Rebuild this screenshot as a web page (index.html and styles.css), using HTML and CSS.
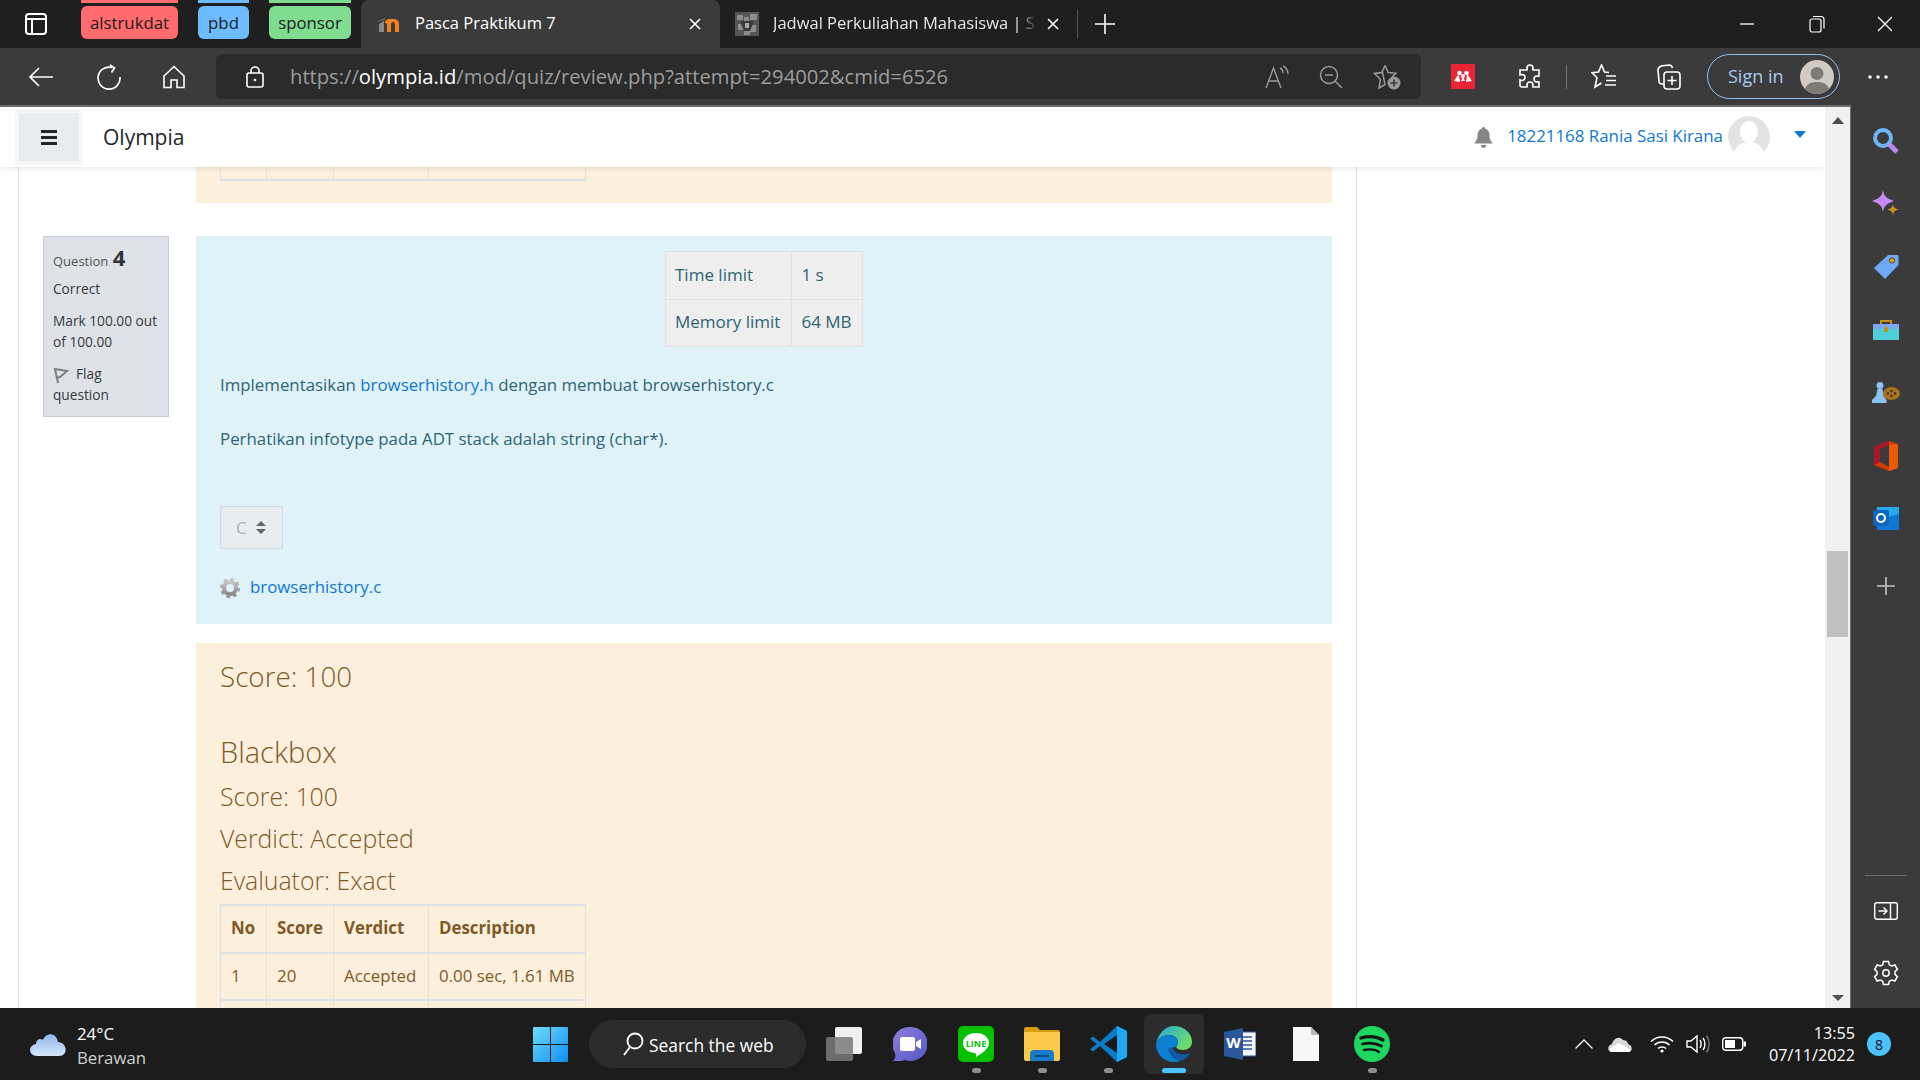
FILE: index.html
```html
<!DOCTYPE html>
<html lang="id">
<head>
    <meta charset="UTF-8">
    <title>Pasca Praktikum 7</title>
    <link rel="stylesheet" href="styles.css">
</head>
<body>
    <div class="tabstrip">
        <svg class="win-icon" width="22" height="22" viewBox="0 0 22 22" fill="none" stroke="#fff" stroke-width="2"><rect x="1" y="1" width="20" height="20" rx="3"/><path d="M1 6h20M7 6v15"/></svg>
        <div class="group group-red"><span>alstrukdat</span></div>
        <div class="group group-blue"><span>pbd</span></div>
        <div class="group group-green"><span>sponsor</span></div>
        <div class="tab tab-active">
            <svg class="favicon" width="24" height="24" viewBox="0 0 24 24"><path d="M8 20V11c0-3 2-4 5-4h3c4 0 6 2 6 5v8h-4v-8c0-1-1-2-2-2s-2 1-2 2v8h-4v-8c0-1-1-1-2-1z" fill="#f58220"/><path d="M2 20v-8l5-3v11z" fill="#8a8a8a"/><path d="M1 9l7-3v2l-7 2z" fill="#666"/></svg>
            <span class="tab-title">Pasca Praktikum 7</span>
            <svg class="tab-close" width="14" height="14" viewBox="0 0 14 14" stroke="#fff" stroke-width="1.6"><path d="M2 2l10 10M12 2L2 12"/></svg>
        </div>
        <div class="tab tab-other">
            <svg class="favicon" width="24" height="24" viewBox="0 0 24 24"><rect width="24" height="24" fill="#555"/><path d="M2 3h6v5H2zM15 2h7v6h-7zM9 5h5v6H9zM3 12h6v6H3zM14 13h7v7h-7zM9 17h6v6H9z" fill="#8d8d8d"/><path d="M6 9h12v3l-3 7H9l-3-7z" fill="#3a3a3a"/><path d="M10 11h4v5h-4z" fill="#a8a8a8"/></svg>
            <span class="tab-title tab-title-fade">Jadwal Perkuliahan Mahasiswa | S</span>
            <svg class="tab-close" width="14" height="14" viewBox="0 0 14 14" stroke="#fff" stroke-width="1.6"><path d="M2 2l10 10M12 2L2 12"/></svg>
        </div>
        <div class="tab-sep"></div>
        <svg class="new-tab" width="22" height="22" viewBox="0 0 22 22" stroke="#fff" stroke-width="1.6"><path d="M11 1v20M1 11h20"/></svg>
        <div class="win-buttons">
            <svg width="16" height="16" viewBox="0 0 16 16" stroke="#fff" stroke-width="1.3"><path d="M1 8h14"/></svg>
            <svg class="win-restore" width="16" height="18" viewBox="0 0 16 18" fill="none" stroke="#fff" stroke-width="1.2"><rect x="1" y="4" width="11" height="13" rx="2"/><path d="M4 1.500h8a3 3 0 0 1 3 3v9"/></svg>
            <svg width="16" height="16" viewBox="0 0 16 16" stroke="#fff" stroke-width="1.2"><path d="M1 1l14 14M15 1L1 15"/></svg>
        </div>
    </div>

    <div class="toolbar">
        <svg class="tool-back" width="26" height="22" viewBox="0 0 26 22" fill="none" stroke="#fff" stroke-width="1.7"><path d="M25 11H2M11 2l-9 9 9 9"/></svg>
        <svg class="tool-reload" width="26" height="26" viewBox="0 0 26 26" fill="none" stroke="#fff" stroke-width="1.7"><path d="M16 3.500a11 11 0 1 0 8 9.500"/><path d="M14 1l4.500 3-3 4.500"/></svg>
        <svg class="tool-home" width="24" height="24" viewBox="0 0 24 24" fill="none" stroke="#fff" stroke-width="1.6"><path d="M12 1.500L2 11v11.500h7V15h6v7.500h7V11z"/></svg>
        <div class="addressbar">
            <svg class="lock" width="18" height="22" viewBox="0 0 18 22" fill="none" stroke="#fff" stroke-width="1.6"><rect x="1" y="7" width="16" height="14" rx="2"/><path d="M5 7V5a4 4 0 0 1 8 0v2"/><circle cx="9" cy="14" r="1.300" fill="#fff" stroke="none"/></svg>
            <div class="url">https://<b>olympia.id</b>/mod/quiz/review.php?attempt=294002&amp;cmid=6526</div>
            <svg class="addr-read" width="26" height="24" viewBox="0 0 26 24" fill="none" stroke="#9a9a9a" stroke-width="1.400"><path d="M1 23L8.500 3 16 23M4 16h9"/><path d="M15 3c2 1 3 3 3 5M18 1c3 1.500 5 4 5 8"/></svg>
            <svg class="addr-zoom" width="24" height="24" viewBox="0 0 24 24" fill="none" stroke="#9a9a9a" stroke-width="1.500"><circle cx="10" cy="10" r="8.500"/><path d="M6 10h8M16 16l7 7"/></svg>
            <svg class="addr-fav" width="28" height="26" viewBox="0 0 28 26" fill="none" stroke="#9a9a9a" stroke-width="1.500"><path d="M12 1.500l3.200 7 7.800 .8-4 3.700M12 20.500l-6 3.500 1.500-8.600-6-6 8-1z"/><path d="M12 1.500L8.500 9.400"/><circle cx="21" cy="19" r="6.500" fill="#9a9a9a" stroke="none"/><path d="M21 15.500v7M17.500 19h7" stroke="#3b3b3b" stroke-width="1.700"/></svg>
        </div>
        <svg class="ext-mendeley" width="24" height="25" viewBox="0 0 24 25"><rect width="24" height="25" fill="#ea2335"/><circle cx="8.500" cy="9" r="2.300" fill="#fff"/><circle cx="15.500" cy="9" r="2.300" fill="#fff"/><circle cx="12" cy="12" r="2" fill="#fff"/><path d="M3 17c2-2 2-5 5-6l1 7zM21 17c-2-2-2-5-5-6l-1 7zM10 17l2-4 2 4z" fill="#fff"/></svg>
        <svg class="ext-puzzle" width="24" height="26" viewBox="0 0 24 26" fill="none" stroke="#fff" stroke-width="1.600"><path d="M9 4a3 3 0 0 1 6 0c0 1-.5 1 0 2h6v6c-1 .5-1 0-2 0a3 3 0 0 0 0 6c1 0 1-.5 2 0v5H15c-.5-1 0-1.500 0-2a3 3 0 0 0-6 0c0 .5.500 1 0 2H4c-1.500 0-2-1-2-2v-5c1 .5 1.500.5 2 .5a3 3 0 0 0 0-6c-.5 0-1 0-2 .5V6h7c.5-1 0-1 0-2z"/></svg>
        <div class="tool-sep"></div>
        <svg class="tool-favs" width="26" height="26" viewBox="0 0 26 26" fill="none" stroke="#fff" stroke-width="1.600"><path d="M18 8.500l-4.500-.4L10.500 1 7.500 8.100 1 8.700l5 5L4 23l6.500-4"/><path d="M15 12h10M15 16.500h10M14 21h11"/></svg>
        <svg class="tool-coll" width="24" height="26" viewBox="0 0 24 26" fill="none" stroke="#fff" stroke-width="1.600"><path d="M7 20l-2 0c-2 0-3-1-3-3L1 6c0-2 1-3 3-4l8-1c1.500 0 3 1 3.500 3"/><rect x="7" y="8" width="16" height="17" rx="3"/><path d="M15 12v9M10.500 16.500h9"/></svg>
        <div class="signin">
            <span>Sign in</span>
            <svg width="34" height="34" viewBox="0 0 34 34"><circle cx="17" cy="17" r="17" fill="#cfcbc4"/><circle cx="17" cy="13.500" r="6.500" fill="#7d7a75"/><path d="M5 29c2-6 7-7 12-7s10 1 12 7a17 17 0 0 1-24 0z" fill="#7d7a75"/></svg>
        </div>
        <svg class="tool-dots" width="20" height="4" viewBox="0 0 20 4" fill="#fff"><circle cx="2" cy="2" r="1.800"/><circle cx="10" cy="2" r="1.800"/><circle cx="18" cy="2" r="1.800"/></svg>
    </div>

    <div class="browser-main">
        <div class="viewport">
            <div class="page">
                <header class="site-header">
                    <div class="nav-toggle"><div class="nav-toggle-inner"><span></span><span></span><span></span></div></div>
                    <div class="brand">Olympia</div>
                    <svg class="bell" width="19" height="21" viewBox="0 0 19 21" fill="#868686"><path d="M9.500 0c1 0 1.500 .7 1.500 1.500C14 2.300 15.500 5 15.500 8c0 4 1 6 3.500 8.500H0C2.500 14 3.500 12 3.500 8 3.500 5 5 2.300 8 1.500 8 .7 8.500 0 9.500 0zM7 18h5c0 2-1 3-2.500 3S7 20 7 18z"/></svg>
                    <a class="username">18221168 Rania Sasi Kirana</a>
                    <svg class="user-pic" width="42" height="42" viewBox="0 0 42 42"><circle cx="21" cy="21" r="21" fill="#e3e3e3"/><ellipse cx="21" cy="16" rx="9" ry="11" fill="#fff"/><path d="M6 37c2-8 9-11 15-11s13 3 15 11a21 21 0 0 1-30 0z" fill="#fff"/></svg>
                    <div class="user-caret"></div>
                </header>

                <div class="region">
                    <div class="stub-row">
                        <div class="alert-warning stub-block">
                            <table class="result-table stub-table">
                                <tr><td class="col-no"></td><td class="col-score"></td><td class="col-verdict"></td><td class="col-desc"></td></tr>
                            </table>
                        </div>
                    </div>

                    <div class="question">
                        <div class="q-info">
                            <div class="q-no">Question <b>4</b></div>
                            <div class="q-state">Correct</div>
                            <div class="q-grade">Mark 100.00 out<br>of 100.00</div>
                            <div class="q-flag"><svg width="16" height="17" viewBox="0 0 16 17" fill="none" stroke="#808080" stroke-width="2"><path d="M5 16L2 2l12 2-7 6-3 .5"/></svg>Flag<br>question</div>
                        </div>
                        <div class="q-content">
                            <div class="alert-info">
                                <table class="limit-table">
                                    <tr><td class="limit-label">Time limit</td><td class="limit-value">1 s</td></tr>
                                    <tr><td class="limit-label">Memory limit</td><td class="limit-value">64 MB</td></tr>
                                </table>
                                <p class="p-first">Implementasikan <a>browserhistory.h</a> dengan membuat browserhistory.c</p>
                                <p class="p-second">Perhatikan infotype pada ADT stack adalah string (char*).</p>
                                <div class="lang-select">C
                                    <svg width="10" height="13" viewBox="0 0 10 13" fill="#666"><path d="M5 0l5 5H0zM5 13L0 8h10z"/></svg>
                                </div>
                                <div class="file-row">
                                    <svg width="20" height="20" viewBox="0 0 20 20"><defs><linearGradient id="cog" x1="0" y1="0" x2="0" y2="1"><stop offset="0" stop-color="#c4c4c4"/><stop offset="1" stop-color="#8a8a8a"/></linearGradient></defs><circle cx="10" cy="10" r="6" fill="none" stroke="url(#cog)" stroke-width="4"/><circle cx="10" cy="10" r="8.500" fill="none" stroke="url(#cog)" stroke-width="3" stroke-dasharray="3.300 3.400"/></svg>
                                    <a>browserhistory.c</a>
                                </div>
                            </div>
                            <div class="alert-warning result-block">
                                <div class="h-score">Score: 100</div>
                                <div class="h-blackbox">Blackbox</div>
                                <div class="h-line">Score: 100</div>
                                <div class="h-line">Verdict: Accepted</div>
                                <div class="h-line">Evaluator: Exact</div>
                                <table class="result-table">
                                    <tr><th class="col-no">No</th><th class="col-score">Score</th><th class="col-verdict">Verdict</th><th class="col-desc">Description</th></tr>
                                    <tr><td>1</td><td>20</td><td>Accepted</td><td>0.00 sec, 1.61 MB</td></tr>
                                    <tr><td></td><td></td><td></td><td></td></tr>
                                </table>
                            </div>
                        </div>
                    </div>
                </div>
            </div>

            <div class="scrollbar">
                <div class="arrow-up"></div>
                <div class="thumb"></div>
                <div class="arrow-down"></div>
            </div>
        </div>

        <aside class="sidebar">
            <div class="side-item"><svg width="28" height="28" viewBox="0 0 28 28" fill="none"><circle cx="11" cy="11" r="8" stroke="#6cb8f5" stroke-width="4"/><path d="M17 17l8 8" stroke="#b58ae8" stroke-width="5"/></svg></div>
            <div class="side-item"><svg width="28" height="28" viewBox="0 0 28 28"><path d="M11 0c1 6 3.500 8.500 11 11-7.500 2.500-10 5-11 11-1-6-3.500-8.500-11-11C7.500 8.500 10 6 11 0z" fill="#c58cf5"/><path d="M21 14c.5 3.500 2 4.500 5.500 5.500-3.500 1-5 2-5.500 6-.5-4-2-5-5.500-6 3.500-1 5-2 5.500-5.500z" fill="#c4921c"/></svg></div>
            <div class="side-item"><svg width="26" height="26" viewBox="0 0 26 26"><path d="M15 1h9c1 0 1.500 .5 1.500 1.500V11L12 25 1 14z" fill="#6ea9f7"/><circle cx="19" cy="6.500" r="2.600" fill="#e0a020" stroke="#5a4010"/></svg></div>
            <div class="side-item"><svg width="28" height="22" viewBox="0 0 28 22"><path d="M9 5V2h10v3" fill="none" stroke="#c4921c" stroke-width="2"/><rect x="1" y="5" width="26" height="16" rx="1" fill="#4fd0d6"/><rect x="1" y="5" width="26" height="5" fill="#7ba8f2"/><rect x="12" y="8" width="4" height="5" fill="#c4921c"/></svg></div>
            <div class="side-item"><svg width="28" height="22" viewBox="0 0 28 22"><circle cx="8" cy="3.500" r="3.500" fill="#8cc4f7"/><path d="M5.500 7h5l1 7 3 4v3H0v-3l4-4z" fill="#8cc4f7"/><ellipse cx="19.500" cy="11.500" rx="8.500" ry="6.500" fill="#a9741c"/><circle cx="16" cy="11.500" r="1.200" fill="#333"/><circle cx="19.500" cy="9" r="1.200" fill="#333"/><circle cx="19.500" cy="14" r="1.200" fill="#333"/><circle cx="23" cy="11.500" r="1.200" fill="#333"/></svg></div>
            <div class="side-item"><svg width="26" height="30" viewBox="0 0 26 30"><path d="M16 0L1 6v18l15 6 9-3V3z" fill="#d83b01"/><path d="M16 0v4L7 8v13l-6 3V6z" fill="#a8182a"/><path d="M16 4L7 8v13l9 5z" fill="#3b3b3b"/><path d="M16 4l9-1v24l-9 3z" fill="#e85a05"/></svg></div>
            <div class="side-item"><svg width="26" height="25" viewBox="0 0 26 25"><rect x="4" y="1" width="22" height="23" fill="#28a8ea"/><path d="M4 14l22-6v16H4z" fill="#0f78d4"/><rect y="4" width="16" height="16" rx="2" fill="#0a66c0"/><circle cx="8" cy="12" r="4" fill="none" stroke="#fff" stroke-width="2"/></svg></div>
            <div class="side-item side-plus"><svg width="18" height="18" viewBox="0 0 18 18" stroke="#c4c4c4" stroke-width="1.600"><path d="M9 0v18M0 9h18"/></svg></div>
            <div class="side-sep"></div>
            <div class="side-item side-low"><svg width="24" height="18" viewBox="0 0 24 18" fill="none" stroke="#fff" stroke-width="1.400"><rect x=".7" y=".7" width="22.600" height="16.600" rx="2"/><path d="M16.500 1v16M4.500 9h8M9.500 5.500L13 9l-3.500 3.500"/></svg></div>
            <div class="side-item side-low"><svg width="26" height="26" viewBox="0 0 26 26" fill="none" stroke="#fff" stroke-width="1.500"><circle cx="13" cy="13" r="3.200"/><path d="M10.500 1.500h5l.8 3.300 2.400 1.200 3.200-1 2.500 4.300-2.400 2.300v2.800l2.400 2.300-2.500 4.300-3.200-1-2.400 1.200-.8 3.300h-5l-.8-3.300-2.400-1.200-3.200 1-2.500-4.300 2.400-2.300v-2.800L1.600 9.300l2.500-4.300 3.200 1 2.400-1.200z"/></svg></div>
        </aside>
    </div>

    <footer class="taskbar">
        <div class="weather">
            <svg width="36" height="24" viewBox="0 0 36 24"><defs><linearGradient id="cloud" x1="0" y1="0" x2="0" y2="1"><stop offset="0" stop-color="#8eb6ee"/><stop offset="1" stop-color="#d8e6fa"/></linearGradient></defs><path d="M7 24c-9 0-9-11-1-12 0-5 5-6 7-4 2-7 13-9 15 2 9 0 11 14 1 14z" fill="url(#cloud)"/></svg>
            <div class="weather-text"><div>24°C</div><div class="weather-sub">Berawan</div></div>
        </div>
        <div class="task-cell">
            <svg width="35" height="35" viewBox="0 0 35 35"><defs><linearGradient id="win" x1="0" y1="0" x2="1" y2="1"><stop offset="0" stop-color="#6fdcfb"/><stop offset="1" stop-color="#0f8df0"/></linearGradient></defs><path d="M0 1a1 1 0 0 1 1-1h16v17H0zM18 0h16a1 1 0 0 1 1 1v16H18zM0 18h17v17H1a1 1 0 0 1-1-1zM18 18h17v16a1 1 0 0 1-1 1H18z" fill="url(#win)"/></svg>
        </div>
        <div class="task-search">
            <svg width="22" height="24" viewBox="0 0 22 24" fill="none" stroke="#fff" stroke-width="1.800"><circle cx="13" cy="9" r="7.500"/><path d="M8 15l-6 8"/></svg>
            <span>Search the web</span>
        </div>
        <div class="task-cell"><svg width="36" height="34" viewBox="0 0 36 34"><rect x="9" width="27" height="27" rx="2" fill="#f0f0f0"/><rect y="10" width="27" height="24" rx="2" fill="#7a7a7a" fill-opacity=".85"/></svg></div>
        <div class="task-cell"><svg width="34" height="34" viewBox="0 0 34 34"><defs><linearGradient id="chat" x1="0" y1="0" x2="1" y2="1"><stop offset="0" stop-color="#8d7fd8"/><stop offset="1" stop-color="#5558c8"/></linearGradient></defs><path d="M17 0a17 17 0 1 1-5 33c-3 1-8 2-12 1 2-2 3-4 2-8A17 17 0 0 1 17 0z" fill="url(#chat)"/><rect x="7" y="10" width="15" height="14" rx="2" fill="#fff"/><path d="M23 15l5-3v10l-5-3z" fill="#fff"/></svg></div>
        <div class="task-cell running"><svg width="36" height="36" viewBox="0 0 36 36"><rect width="36" height="36" rx="5" fill="#06c100"/><path d="M18 7c8 0 13 4.500 13 10 0 6-8 11-13 14 1-3 0-4-2-4C9 26 5 22 5 17 5 11.500 10 7 18 7z" fill="#fff"/><text x="18" y="21" text-anchor="middle" class="line-text">LINE</text></svg></div>
        <div class="task-cell running"><svg width="36" height="34" viewBox="0 0 36 34"><path d="M0 2a2 2 0 0 1 2-2h11l3 3h18a2 2 0 0 1 2 2v4H0z" fill="#d99c0c"/><path d="M0 5h36v27a2 2 0 0 1-2 2H2a2 2 0 0 1-2-2z" fill="#fdc94a"/><path d="M6 27a4 4 0 0 1 4-4h16a4 4 0 0 1 4 4v7H6z" fill="#1a79c9"/><rect x="11" y="28" width="14" height="2" fill="#0e4d8a"/></svg></div>
        <div class="task-cell running"><svg width="37" height="36" viewBox="0 0 37 36"><path d="M27 0l10 5v26l-10 5L10 20l-7 5.500L0 23l7-5-7-5 3-2.500L10 16z" fill="#0c7cc4"/><path d="M27 0l10 5v26l-10 5z" fill="#22a6f2"/><path d="M27 9L14 18l13 9z" fill="#1a1a1a"/></svg></div>
        <div class="task-cell active">
            <svg width="36" height="36" viewBox="0 0 36 36"><defs><linearGradient id="edge1" x1="0" y1="0" x2="1" y2=".6"><stop offset="0" stop-color="#20a9d8"/><stop offset="1" stop-color="#6fdc6a"/></linearGradient></defs><path d="M18 0c10 0 18 7 18 16 0 5-4 8-9 8-4 0-6-1-7-3 1-1 2-3 2-5 0-4-4-7-9-7-6 0-12 4-13 9C2 8 9 0 18 0z" fill="url(#edge1)"/><path d="M0 18C1 13 7 9 13 9c5 0 9 3 9 7 0 3-3 6-7 6-3 0-3 2-1 5 2 4 6 7 10 8-2 1-4 1-6 1C8 36 0 28 0 18z" fill="#0d7fd0"/><path d="M15 22c-3 0-3 2-1 5 2 4 6 7 10 8 4-1 8-4 10-8-3 1-6 2-9 1-5-1-8-4-8-7z" fill="#0e5aa8"/></svg>
        </div>
        <div class="task-cell"><svg width="32" height="32" viewBox="0 0 32 32"><rect x="12" y="4" width="20" height="24" fill="#f3f6fb" stroke="#2b579a"/><path d="M17 9h11M17 13h11M17 17h11M17 21h11" stroke="#2b579a" stroke-width="1.500"/><path d="M0 4l19-4v32L0 28z" fill="#2b579a"/><text x="9.500" y="20" text-anchor="middle" class="word-text">W</text></svg></div>
        <div class="task-cell"><svg width="26" height="34" viewBox="0 0 26 34"><path d="M0 0h18l8 8v26H0z" fill="#f7f7f7"/><path d="M18 0v8h8z" fill="#b8b8b8"/></svg></div>
        <div class="task-cell running"><svg width="36" height="36" viewBox="0 0 36 36" fill="none"><circle cx="18" cy="18" r="18" fill="#1ed760"/><path d="M7 12c7-2 15-2 22 2" stroke="#191414" stroke-width="3.300" stroke-linecap="round"/><path d="M8.500 18c6-1.500 13-1 19 2" stroke="#191414" stroke-width="2.800" stroke-linecap="round"/><path d="M10 24c5-1 11-1 15 2" stroke="#191414" stroke-width="2.300" stroke-linecap="round"/></svg></div>

        <div class="tray">
            <svg width="18" height="10" viewBox="0 0 18 10" fill="none" stroke="#fff" stroke-width="1.300"><path d="M.5 9.500L9 1l8.500 8.500"/></svg>
            <svg class="tray-cloud" width="24" height="16" viewBox="0 0 24 16"><path d="M4 16c-5 0-5-7 0-8 1-5 7-9 11-4 4 0 5 3 5 4 5 1 5 8 0 8z" fill="#d8d8d8"/><path d="M1 13l10-6 12 7-2 2H3z" fill="#fff"/></svg>
            <svg class="tray-wifi" width="24" height="18" viewBox="0 0 24 18" fill="none" stroke="#fff" stroke-width="1.500"><path d="M1 6.500c6-6 16-6 22 0M4.500 10c4-4 11-4 15 0M8 13.500c2-2 6-2 8 0"/><circle cx="12" cy="16" r="1.600" fill="#fff" stroke="none"/></svg>
            <svg width="24" height="20" viewBox="0 0 24 20" fill="none" stroke="#fff" stroke-width="1.400"><path d="M1 7v6h4l6 5V2L5 7z"/><path d="M14 6c1.500 2 1.500 6 0 8M17 4c2.500 3 2.500 9 0 12"/><path d="M20.500 1.500c3.500 5 3.500 12 0 17" stroke="#777"/></svg>
            <svg width="24" height="14" viewBox="0 0 24 14" fill="none" stroke="#fff" stroke-width="1.400"><rect x=".7" y=".7" width="20" height="12.600" rx="3"/><rect x="3" y="3" width="10" height="8" fill="#fff" stroke="none"/><rect x="21.500" y="4.500" width="2.500" height="5" fill="#fff" stroke="none"/></svg>
            <div class="clock"><div>13:55</div><div>07/11/2022</div></div>
            <div class="badge">8</div>
        </div>
    </footer>
</body>
</html>
```

FILE: styles.css
```css
* {
    box-sizing: border-box;
}

html, body {
    margin: 0;
    height: 100%;
}

body {
    width: 1920px;
    height: 1080px;
    overflow: hidden;
    display: flex;
    flex-direction: column;
    font-family: "Open Sans", "Noto Sans", sans-serif;
    background: #1c1c1c;
}

svg {
    display: block;
    flex: none;
}

/* tab strip */
.tabstrip {
    height: 48px;
    display: flex;
    align-items: center;
    background: #1f1f1f;
    padding-left: 25px;
    color: #fff;
}

.win-icon {
    margin-right: 34px;
}

.group {
    height: 39px;
    margin-top: -9px;
    margin-right: 20px;
    border-top: 3px solid;
    padding-top: 3px;
    display: flex;
}

.group span {
    flex: 1;
    border-radius: 6px;
    color: #1c1c1c;
    font-size: 16.800px;
    display: flex;
    align-items: center;
    justify-content: center;
}

.group-red { width: 97px; border-color: #ff6b6e; }
.group-red span { background: #ff6b6e; }
.group-blue { width: 51px; border-color: #6cbcff; }
.group-blue span { background: #6cbcff; }
.group-green { width: 82px; margin-right: 10px; border-color: #7fdc90; }
.group-green span { background: #7fdc90; }

.tab {
    height: 48px;
    display: flex;
    align-items: center;
    position: relative;
}

.tab-active {
    width: 359px;
    padding: 0 18px 0 16px;
    background: #3b3b3b;
    border-radius: 8px 8px 0 0;
}

.tab-other {
    width: 357px;
    padding: 0 17px 0 15px;
}

.favicon {
    margin-right: 14px;
}

.tab-title {
    flex: 1;
    font-size: 16.500px;
    line-height: 22px;
    margin-top: -2px;
    white-space: nowrap;
    overflow: hidden;
}

.tab-other .tab-title {
    color: #e6e6e6;
}

.tab-title-fade {
    -webkit-mask-image: linear-gradient(to right, #000 92%, transparent 100%);
    mask-image: linear-gradient(to right, #000 92%, transparent 100%);
    margin-right: 8px;
}

.tab-sep {
    width: 1px;
    height: 30px;
    background: #555;
}

.new-tab {
    margin-left: 16px;
}

.win-buttons {
    margin-left: auto;
    display: flex;
    align-items: center;
    gap: 54px;
    padding-right: 27px;
}

.win-restore {
    margin-right: -2px;
}

/* toolbar */
.toolbar {
    height: 57px;
    display: flex;
    align-items: center;
    background: #3b3b3b;
    padding: 0 32px 0 28px;
}

.tool-reload { margin-left: 42px; }
.tool-home { margin-left: 40px; }

.addressbar {
    width: 1205px;
    height: 45px;
    margin-left: 30px;
    padding: 0 20px 0 30px;
    border-radius: 6px;
    background: #2b2b2b;
    display: flex;
    align-items: center;
}

.url {
    margin-left: 26px;
    margin-top: -2px;
    flex: 1;
    font-size: 20.200px;
    color: #9d9d9d;
    white-space: nowrap;
}

.url b {
    color: #fff;
    font-weight: 400;
}

.addr-zoom { margin-left: 28px; }
.addr-fav { margin-left: 30px; }

.ext-mendeley { margin-left: 30px; }
.ext-puzzle { margin-left: 43px; }

.tool-sep {
    width: 1px;
    height: 24px;
    background: #777;
    margin-left: 24px;
}

.tool-favs { margin-left: 24px; }
.tool-coll { margin-left: 40px; }

.signin {
    width: 133px;
    height: 45px;
    margin-left: 26px;
    border: 1.500px solid #9cc0ee;
    border-radius: 23px;
    display: flex;
    align-items: center;
    justify-content: space-between;
    padding: 0 5px 0 20px;
    color: #a9c9f2;
    font-size: 18px;
}

.signin span {
    margin-top: -2px;
}

.tool-dots { margin-left: auto; }

/* page and scrollbar */
.browser-main {
    flex: 1;
    display: flex;
    min-height: 0;
}

.viewport {
    width: 1851px;
    display: flex;
    border-top: 2px solid #6e6e6e;
    border-right: 1px solid #6e6e6e;
    background: #fff;
}

.page {
    flex: 1;
    display: flex;
    flex-direction: column;
    min-width: 0;
    overflow: hidden;
}

.site-header {
    height: 60px;
    flex: none;
    display: flex;
    align-items: center;
    background: #fff;
    box-shadow: 0 2px 4px rgba(0, 0, 0, 0.08);
    position: relative;
    z-index: 2;
    padding: 0 19px 0 15px;
}

.nav-toggle {
    width: 68px;
    height: 56px;
    padding: 4px;
    background: #f6f7f8;
}

.nav-toggle-inner {
    height: 100%;
    background: #e9ecef;
    display: flex;
    flex-direction: column;
    align-items: center;
    justify-content: center;
    gap: 3px;
}

.nav-toggle-inner span {
    width: 16px;
    height: 3px;
    background: #212529;
}

.brand {
    margin-left: 20px;
    font-size: 21px;
    color: #212529;
}

.bell {
    margin-left: auto;
}

.username {
    margin-left: 14px;
    margin-top: -4px;
    color: #1177d1;
    font-size: 16.900px;
    white-space: nowrap;
}

.user-pic {
    margin-left: 5px;
}

.user-caret {
    margin-left: 24px;
    margin-top: -6px;
    width: 0;
    height: 0;
    border-left: 6px solid transparent;
    border-right: 6px solid transparent;
    border-top: 7px solid #1177d1;
}

.region {
    flex: 1;
    min-height: 0;
    overflow: hidden;
    margin-left: 18px;
    width: 1339px;
    border-left: 1px solid #dee2e6;
    border-right: 1px solid #dee2e6;
    font-size: 16.850px;
}

.stub-row {
    padding-left: 177px;
    padding-right: 24px;
}

.alert-warning {
    background: #fcefdc;
    color: #7d5a29;
}

.alert-info {
    background: #def2f8;
    color: #2f6473;
    height: 388px;
    padding-top: 15px;
    padding-left: 24px;
}

.alert-info a,
.file-row a {
    color: #1177d1;
}

.stub-block {
    height: 36px;
    padding-left: 24px;
}

.question {
    margin-top: 33px;
    display: flex;
    padding-left: 24px;
    gap: 27px;
}

.q-info {
    width: 126px;
    height: 181px;
    flex: none;
    background: #dee2e6;
    border: 1px solid #c8ced6;
    padding: 5px 4px 0 9px;
    color: #373a3c;
    font-size: 13.700px;
    line-height: 21.500px;
    white-space: nowrap;
}

.q-no {
    font-size: 13px;
    color: #555;
    height: 30px;
    line-height: 30px;
}

.q-no b {
    font-size: 22px;
    color: #333;
    margin-left: 1px;
}

.q-state {
    margin-top: 6px;
}

.q-grade {
    margin-top: 10px;
}

.q-flag {
    margin-top: 10px;
}

.q-flag svg {
    display: inline-block;
    vertical-align: -5px;
    margin-right: 7px;
}

.q-content {
    width: 1136px;
    flex: none;
}

.limit-table {
    border-collapse: collapse;
    margin: 0 auto;
    transform: translateX(-12px);
    width: 198px;
    background: #eee;
    font-size: 17px;
}

.limit-table td {
    border: 1px solid #dee2e6;
    height: 47.500px;
    padding: 0 0 2px 9px;
    white-space: nowrap;
}

.limit-label { width: 127px; }
.limit-value { width: 71px; padding-left: 11px; }

.p-first,
.p-second {
    line-height: 26px;
    margin: 0;
}

.p-first { margin-top: 25px; }
.p-second { margin-top: 28px; }

.lang-select {
    margin-top: 54px;
    width: 63px;
    height: 43px;
    background: #e5edf1;
    border: 1px solid #d3dbe0;
    color: #a8b0b4;
    display: flex;
    align-items: center;
    padding-left: 15px;
    gap: 9px;
}

.file-row {
    margin-top: 25px;
    height: 26px;
    display: flex;
    align-items: center;
    gap: 10px;
}

.file-row svg {
    margin-top: 2px;
}

.file-row a {
    margin-top: -2px;
}

.result-block {
    margin-top: 19px;
    padding: 14px 0 30px 24px;
    height: 500px;
}

.h-score {
    font-size: 27.800px;
    font-weight: 300;
    line-height: 38px;
}

.h-blackbox {
    margin-top: 35px;
    font-size: 29px;
    font-weight: 300;
    line-height: 44px;
}

.h-line {
    font-size: 24.800px;
    font-weight: 300;
    line-height: 42px;
}

.h-blackbox + .h-line {
    margin-top: 1px;
}

.h-line + .result-table {
    margin-top: 3px;
}

.result-table {
    border-collapse: collapse;
    width: 365px;
    table-layout: fixed;
}

.result-table th,
.result-table td {
    border: 1px solid #dee2e6;
    border-width: 2px 1px;
    text-align: left;
    padding: 0 0 2px 10px;
    height: 47.500px;
    white-space: nowrap;
}

.col-no { width: 46px; }
.col-score { width: 67px; }
.col-verdict { width: 95px; }
.col-desc { width: 157px; }

.stub-table td {
    height: 13px;
    border-top: 0;
    border-width: 0 1px 2px;
}

.scrollbar {
    width: 25px;
    flex: none;
    background: #f0f0f0;
    display: flex;
    flex-direction: column;
    align-items: center;
    position: relative;
}

.arrow-up,
.arrow-down {
    width: 0;
    height: 0;
    border-left: 6px solid transparent;
    border-right: 6px solid transparent;
}

.arrow-up {
    margin-top: 10px;
    border-bottom: 7px solid #505050;
}

.arrow-down {
    margin-top: auto;
    margin-bottom: 7px;
    border-top: 6px solid #505050;
}

.thumb {
    width: 21px;
    height: 86px;
    margin-top: 427px;
    background: #c0c0c0;
}

/* edge sidebar */
.sidebar {
    flex: 1;
    background: #3b3b3b;
    display: flex;
    flex-direction: column;
    align-items: center;
    padding: 4px 0 4px;
}

.side-item {
    height: 63px;
    flex: none;
    display: flex;
    align-items: center;
    justify-content: center;
}

.side-plus {
    margin-top: 4px;
}

.side-sep {
    width: 42px;
    height: 1px;
    background: #6e6e6e;
    margin-top: auto;
    margin-bottom: 4px;
}

.side-low {
    height: 62px;
}

/* taskbar */
.taskbar {
    height: 72px;
    flex: none;
    display: flex;
    align-items: center;
    background: #1c1c1c;
    color: #fff;
}

.weather {
    width: 517px;
    display: flex;
    align-items: center;
    padding-left: 30px;
    gap: 11px;
    font-size: 16.800px;
    line-height: 24.500px;
}

.weather-text {
    padding-top: 4px;
}

.weather-sub {
    color: #d0d0d0;
}

.task-cell {
    width: 66px;
    height: 60px;
    display: flex;
    align-items: center;
    justify-content: center;
    position: relative;
    border-radius: 6px;
}

.task-cell.running::after,
.task-cell.active::after {
    content: "";
    position: absolute;
    bottom: 1px;
    left: 29px;
    width: 9px;
    height: 5px;
    border-radius: 3px;
    background: #8e8e8e;
}

.task-cell.active {
    width: 60px;
    margin: 0 3px;
    background: #2c2c2c;
}

.task-cell.active::after {
    left: 18px;
    width: 24px;
    background: #4cc2ff;
}

.task-search {
    width: 217px;
    height: 48px;
    margin: 0 5px 0 6px;
    border-radius: 24px;
    background: #2c2c2c;
    display: flex;
    align-items: center;
    padding-left: 33px;
    gap: 5px;
    font-size: 17.400px;
}

.task-search span {
    margin-top: 2px;
}

.line-text {
    font-family: "Open Sans", sans-serif;
    font-size: 9px;
    font-weight: 700;
    fill: #06c100;
}

.word-text {
    font-family: "Open Sans", sans-serif;
    font-size: 15px;
    font-weight: 700;
    fill: #fff;
}

.tray {
    margin-left: auto;
    display: flex;
    align-items: center;
    gap: 12px;
    padding-right: 29px;
}

.tray-cloud { margin-left: 3px; }
.tray-wifi { margin-left: 6px; }

.clock {
    width: 109px;
    margin-left: -12px;
    text-align: right;
    font-size: 16.200px;
    line-height: 22px;
}

.badge {
    width: 24px;
    height: 24px;
    border-radius: 50%;
    background: #4cc2ff;
    color: #111;
    font-size: 14px;
    display: flex;
    align-items: center;
    justify-content: center;
}
```
